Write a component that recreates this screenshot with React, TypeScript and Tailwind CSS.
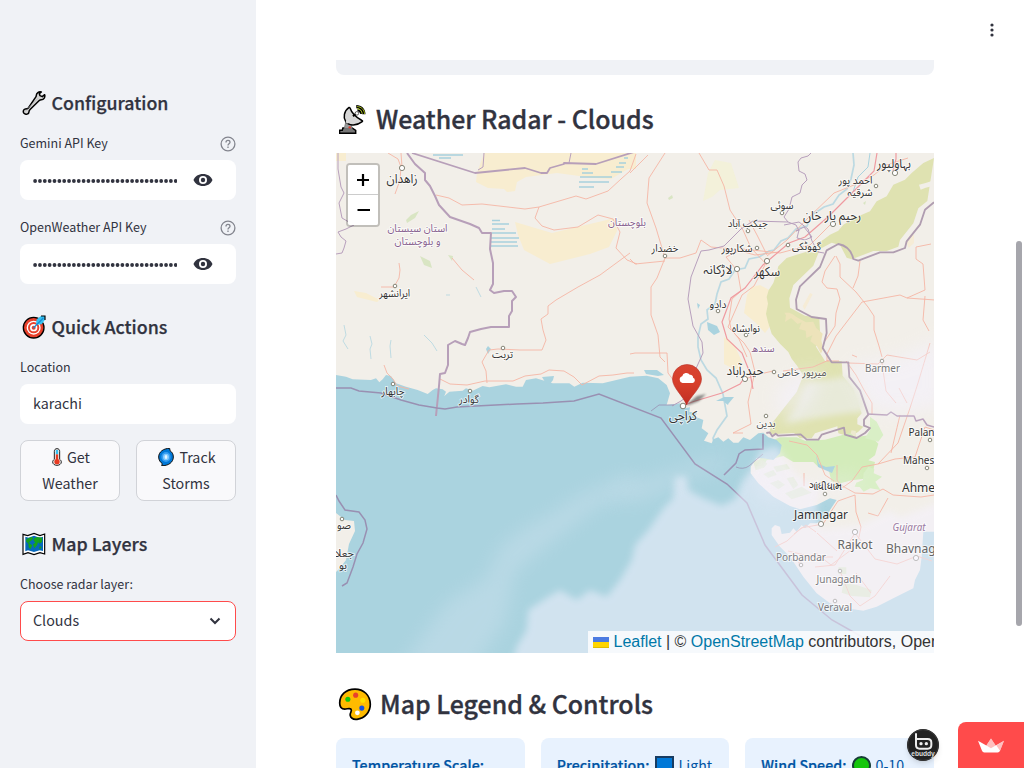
import type { ReactNode } from 'react';

const INK = '#31333f';

function Wrench() {
  return (
    <svg viewBox="0 0 72 72" className="size-6">
      <path d="M9 52c-6 1-8 8-4 13 5 5 15 3 15-5 0-3 2-5 4-7l26-26c2-2 4-3 7-3 8 0 12-8 10-15l-7 6-7-3-2-6 6-5c-8-2-15 3-15 10 0 3-1 5-3 7L18 49c-2 2-5 3-9 3z" transform="translate(1 2)" fill="#d5d5d5" stroke="#000" strokeWidth="4.500" strokeLinejoin="round" />
      <path d="M8 61l6-3M18 52l30-30" stroke="#aaa" strokeWidth="2" />
    </svg>
  );
}

function Target() {
  return (
    <svg viewBox="0 0 72 72" className="size-6">
      <circle cx="35" cy="38" r="31" fill="#e8412c" stroke="#000" strokeWidth="4" />
      <circle cx="35" cy="38" r="21" fill="#fff" />
      <circle cx="35" cy="38" r="17" fill="#e8412c" />
      <circle cx="35" cy="38" r="11" fill="#fff" />
      <circle cx="35" cy="38" r="6" fill="#e8412c" />
      <path d="M42 29l2-16L57 3h12v11L59 28z" fill="#35c1f1" />
      <path d="M57 3h12v12" stroke="#000" strokeWidth="3.500" fill="none" />
      <path d="M34 39L64 9" stroke="#168bd5" strokeWidth="3.500" />
    </svg>
  );
}

function WorldMap() {
  return (
    <svg viewBox="0 0 72 72" className="size-6">
      <path d="M3 7l14 4 19-7 18 7 14-5v60l-14-4-18 6-18-6-15 5z" fill="#fff" stroke="#000" strokeWidth="3.500" />
      <path d="M10 14l9 3 17-6 17 6 10-3v43l-10-2-17 5-18-5-8 3z" fill="#0669bc" />
      <path d="M14 20l7-2 9-3 4 4-7 8-6 4 5 6 5 3-6 12-5-6-1-11-7-7zM36 19l10-4 15 2-1 13-7 5-5-4-3 9-8 9-4-12 7-5-5-6zM54 43l5 2-4 6-5-2z" fill="#16a51b" />
      <path d="M18 16v39M53 16v39" stroke="#0b508a" opacity=".5" />
    </svg>
  );
}

function Radar() {
  return (
    <svg viewBox="0 0 94 102" className="mr-px ml-[3px] h-[34px] w-7">
      <path d="M13 81h31l12 8v10H2V89h9z" fill="#777" stroke="#000" strokeWidth="5" />
      <path d="M23 60h16l5 23H18z" fill="#999" stroke="#777" strokeWidth="3" />
      <path d="M34 12C16 24 14 46 22 58c9 15 34 19 56 2 2-1 1-3-1-4C60 47 44 35 37 14c-1-2-2-2-3-2z" fill="#d7d7d7" stroke="#000" strokeWidth="5" />
      <path d="M47 42l13-11M62 22c7-1 13 5 12 12" stroke="#000" strokeWidth="7" />
      <circle cx="60" cy="32" r="6" fill="#fff" stroke="#000" strokeWidth="2" />
      <path d="M58 4c18 0 31 13 31 31H78C78 23 70 16 58 15z" fill="#000" />
      <path d="M61 9c14 1 24 11 25 25M61 16c9 1 16 8 17 17" stroke="#b9d516" strokeWidth="3" fill="none" />
      <circle cx="29" cy="60" r="6" fill="#ddd" /><circle cx="36" cy="79" r="4" fill="#e33b2d" />
    </svg>
  );
}

function Palette() {
  return (
    <svg viewBox="0 0 100 100" className="size-[34px]">
      <path d="M50 6C22 6 5 24 5 47c0 13 6 18 15 18 7 0 14-4 18 0 5 6-4 10-2 19 2 8 10 12 20 11 23-3 39-21 39-44C95 24 75 6 50 6z" fill="#fb0" stroke="#000" strokeWidth="5" />
      <circle cx="52" cy="24" r="7.500" fill="#e8412c" /><circle cx="29" cy="36" r="7.500" fill="#16c60c" />
      <circle cx="73" cy="39" r="7.500" fill="#ffe000" /><circle cx="70" cy="62" r="7.500" fill="#1550e0" />
      <circle cx="57" cy="76" r="7" fill="#fff" />
    </svg>
  );
}

function Thermometer() {
  return (
    <svg viewBox="0 0 30 54" className="h-[18px] w-[10px] shrink-0">
      <path d="M15 2c-5 0-8 3-8 8v24c-3 2-5 5-5 8 0 6 6 10 13 10s13-4 13-10c0-3-2-6-5-8V10c0-5-3-8-8-8z" fill="#eee" stroke="#222" strokeWidth="3" />
      <path d="M15 6v13" stroke="#35c1f1" strokeWidth="7" />
      <path d="M15 19v20" stroke="#e83b21" strokeWidth="7" /><circle cx="15" cy="41" r="8" fill="#e83b21" />
    </svg>
  );
}

function Cyclone() {
  return (
    <svg viewBox="0 0 48 54" className="h-[18px] w-4 shrink-0">
      <path d="M35 1C16 1 2 12 2 27c0 9 5 16 11 20l-2 6c20 1 35-10 35-26 0-9-4-15-10-19z" fill="#0078d7" stroke="#111" strokeWidth="3" />
      <ellipse cx="24" cy="27" rx="14" ry="15" fill="#369cf0" />
      <ellipse cx="24" cy="27" rx="9" ry="10" fill="#83cbff" /><ellipse cx="24" cy="27" rx="4" ry="6" fill="#e5f5ff" />
    </svg>
  );
}

function Help() {
  return (
    <svg viewBox="0 0 16 16" className="size-4" fill="none" stroke="#83858e" strokeWidth="1.300">
      <circle cx="8" cy="8" r="6.900" />
      <path d="M6 6.400c0-1.200.8-2 2-2s2 .7 2 1.800c0 1.500-2 1.600-2 3.200" /><path d="M8 10.600v1.400" />
    </svg>
  );
}

function Eye() {
  return (
    <svg viewBox="0 0 20 14" className="h-[14px] w-5">
      <path fillRule="evenodd" d="M10 1C5.500 1 2 3.300.5 7 2 10.700 5.500 13 10 13s8-2.300 9.500-6C18 3.300 14.500 1 10 1zm0 10a4 4 0 110-8 4 4 0 010 8z" fill={INK} />
      <circle cx="10" cy="7" r="2.200" fill={INK} />
    </svg>
  );
}

function SideHeading({ icon, children }: { icon: ReactNode; children: ReactNode }) {
  return (
    <h3 className="flex h-6 items-center gap-[5.5px] pl-[2px] text-[17.8px] leading-6 font-medium">
      {icon}
      <span className="pb-[2px] whitespace-nowrap [-webkit-text-stroke:0.25px_#31333f]">{children}</span>
    </h3>
  );
}

function KeyField({ label }: { label: string }) {
  return (
    <div>
      <div className="flex h-6 items-center justify-between text-[12.5px] leading-6">
        <span className="pb-[2px]">{label}</span>
        <Help />
      </div>
      <div className="mt-1 flex h-10 items-center rounded-lg bg-white pl-[13px]">
        <svg viewBox="0 0 144 10" className="mt-px h-[10px] w-36">
          <path d="M2.100 5h144" stroke={INK} strokeWidth="3.800" strokeLinecap="round" strokeDasharray="0 4.850" />
        </svg>
        <span className="ml-4"><Eye /></span>
      </div>
    </div>
  );
}

type Label = { t: string; x: number; y: number; w?: number; s?: number; c?: string; start?: boolean; i?: boolean };
const P = '#87608f';
const labels: Label[] = [
  { t: 'زاهدان', x: 66, y: 30, w: 31, s: 13 },
  { t: 'استان سیستان', x: 81.5, y: 79, w: 60, c: P },
  { t: 'و بلوچستان', x: 81.500, y: 91.500, w: 46, c: P },
  { t: 'ایرانشهر', x: 58.7, y: 144, w: 31 },
  { t: 'تربت', x: 166.5, y: 205, w: 21 },
  { t: 'چابهار', x: 57, y: 242, w: 23 },
  { t: 'گوادر', x: 133, y: 250, w: 20 },
  { t: 'صو', x: 8, y: 376, w: 14 },
  { t: 'جعلا', x: 8.500, y: 404, w: 19 },
  { t: 'بو', x: 7, y: 416, w: 8 },
  { t: 'بلوچستان', x: 291, y: 73, w: 38, c: P },
  { t: 'خضدار', x: 329, y: 99, w: 27 },
  { t: 'سوئی', x: 446, y: 56, w: 23 },
  { t: 'جیکب آباد', x: 411.7, y: 74, w: 40 },
  { t: 'شکارپور', x: 401, y: 99, w: 31 },
  { t: 'لاڑکانہ', x: 382, y: 121, w: 29, s: 13 },
  { t: 'سکھر', x: 431, y: 123, w: 26, s: 13 },
  { t: 'گھوٹکی', x: 470.5, y: 97, w: 29 },
  { t: 'رحیم یار خان', x: 496, y: 67, w: 58, s: 13 },
  { t: 'احمد پور', x: 519.5, y: 31, w: 34 },
  { t: 'شرقیہ', x: 524, y: 43, w: 25 },
  { t: 'بہاولپور', x: 558, y: 15, w: 34, s: 13 },
  { t: 'دادو', x: 382, y: 155, w: 17 },
  { t: 'نوابشاہ', x: 410, y: 179, w: 28 },
  { t: 'سندھ', x: 427, y: 199, w: 23, c: P },
  { t: 'حیدرآباد', x: 409, y: 222, w: 37, s: 13 },
  { t: 'میرپور خاص', x: 466, y: 223, w: 49, c: '#555' },
  { t: 'Barmer', x: 546.5, y: 219, w: 35, c: '#777' },
  { t: 'کراچی', x: 347, y: 267, w: 28, s: 13 },
  { t: 'بدین', x: 430, y: 274, w: 19, c: '#555' },
  { t: 'Palanpur', x: 572.5, y: 283, s: 10, start: true },
  { t: 'Mahesana', x: 567, y: 311, s: 10, start: true },
  { t: 'Ahmedabad', x: 566, y: 339, s: 12, start: true },
  { t: 'ગાંધીધામ', x: 489, y: 337, w: 33, s: 10 },
  { t: 'Jamnagar', x: 485, y: 365.5, w: 54, s: 12 },
  { t: 'Rajkot', x: 519, y: 395.5, w: 35, s: 12, c: '#666' },
  { t: 'Bhavnagar', x: 550, y: 400, s: 12, start: true, c: '#666' },
  { t: 'Porbandar', x: 465, y: 407.5, w: 50, c: '#7c7b80' },
  { t: 'Gujarat', x: 573, y: 377.5, w: 33, c: '#9b7ba3', i: true },
  { t: 'Junagadh', x: 503, y: 430, w: 45, c: '#7c7b80' },
  { t: 'Veraval', x: 499, y: 458, w: 34, c: '#7c7b80' },
];

const towns: [number, number, number][] = [
  [66, 15, 2.6], [59, 133, 1.8], [167, 195, 1.8], [57, 231, 1.8], [134, 238, 1.8], [6, 366, 1.8],
  [329, 103, 1.8], [446, 60, 1.8], [412, 78, 1.8], [421, 95, 1.8], [401, 116, 2.6], [431, 108, 2.6],
  [452, 92, 1.8], [497, 71, 2.6], [540, 33, 1.8], [559, 20, 2.6], [382, 158, 1.8], [410, 182, 1.8],
  [409, 226, 2.6], [438, 219, 1.8], [546, 208, 1.8], [347, 253, 2.8], [430, 263, 1.8], [594, 287, 1.8],
  [591, 315, 1.8], [489, 341, 1.8], [485, 371, 2.6], [519, 379, 2.6], [580, 405, 2.6], [465, 412, 1.8],
  [504, 418, 1.8], [499, 448, 1.8],
];

const wetlands = [
  [97, 2, 30], [103, 5, 12], [156, 67.5, 8], [156, 71, 17], [156, 76, 13], [156, 80, 24], [155, 85, 28],
  [154, 89, 27], [155, 93, 27], [246, 16, 6], [246, 20, 11], [244, 24, 32], [243, 29, 30], [243, 34, 15],
  [280, 14, 8], [275, 19, 11], [283, 10, 7], [288, 5, 4],
];

function RadarMap() {
  return (
    <svg viewBox="0 0 598 500" className="block h-[500px] w-[598px]">
      <defs>
        <filter id="soft" x="-20%" y="-20%" width="140%" height="140%"><feGaussianBlur stdDeviation="11" /></filter>
        <filter id="wide" x="-40%" y="-40%" width="180%" height="180%"><feGaussianBlur stdDeviation="9" /></filter>
        <filter id="shade" x="-30%" y="-30%" width="160%" height="160%"><feGaussianBlur stdDeviation="1" /></filter>
        <linearGradient id="pin" x1="0" x2="0" y1="0" y2="1">
          <stop stopColor="#d94431" /><stop offset=".5" stopColor="#d63e2a" /><stop offset="1" stopColor="#c02d24" />
        </linearGradient>
      </defs>
      <rect width="598" height="500" fill="#f2efe9" />
      <g fill="#f8edd0">
        <path d="M148 0l-7 20-1 9 12 6 16 1 3 3 8-1 2-9 9-5 31-4 37 5 17 1 17-10h8V0z" />
        <path d="M179 69l37 11 21-5 42-10 2 13-8 16-19 7-40 10-26-14-6-15zM0 0h10v8H0zM18 138l12 2 14 7-3 2-20-5z" />
        <path d="M424 132l11 6-2 19 2 15-6 8-9-10-12-10 3-18 5-8zM388 184l10 7 9 20-7 6-12-6z" />
      </g>
      <path d="M379 7l16 3 8 25-19 2-8 7-9 4 5-28z" fill="#f3f1da" />
      <g fill="#d9e5c3"><path d="M70 67l5-5 8-4-4 7-8 5zM84 103l10 5 2 7-8-3zM112 102l5 1-1 5zM332 45l4-3 1 3-4 2zM527 50l3-2-1 4z" /></g>
      {wetlands.map(([x, y, w], i) => <path key={i} d={`M${x} ${y}h${w}`} stroke="#a7d0dd" strokeWidth="1.500" />)}

      <g transform="translate(394 0) scale(.33333)">
        <path d="M612 15l-32 15-35 30-20 20-35 15-20 35-30 15-20 30-35 15-20 10-25 15-15 18-25 12-20 15-15 10 5 18-15 12-25-4-30 9-30 10-25 25-5 20-10 30-14 22-6 20 4 20-6 30 6 25 11 35 25 30 25 25 10 20 15 20 20 30-20 50-40 50-35 45-8 30 8 2 67-4 18 16 35 0 10-15 67-21 3 21 35 10 25-15 15-15-18-7 0-18 13-15-25-73-32-40-3-44-50 0-27-43 12-45-2-42-43-6-45-24-2-28 12-40 60-58 20-50 35-19 25 7 20 38 15 5 65-25 40 0 35-13 5-20 40-50 15-45 27-22z" fill="#dfe2b1" />
        <path d="M612 82l-25 8-20 5 5 15 15-6 25-6z" fill="#f2efe9" />
        <path d="M158 472l10 15-3 20 18-12 20 18 12-5-8 20 20 5 2 22 18-8-6 18 20 15 12 22 6-15-5-25 4-20-20-18-8-18-22 2-25-14-15-10-10-5-15 0z" fill="#ede3ba" />
        <path d="M540 245l12 0 0 25-16 15-6-15zM240 420l8 4-24 46-6-10z" fill="#f6ecd6" />
        <path d="M355 860l10-28 12 2 2 20z" fill="#ece9cf" />
        <path d="M230 690l120-20 45 55 10 50-85 10-60 10-95 15 35-50z" fill="#e8ead9" filter="url(#wide)" />
      </g>
      <g transform="translate(294 197) scale(.33333)">
        <path d="M430 270l20-8 50 0 25 10 60-3 75-20 15 12 45-5 25 25-10 35-20 15 20 5-5 25-20 5-5 20-40 5-40 10-20-5-10-40-30-5-15-15-60 0-30-18-20 5-30 8-10 18-25 0z" fill="#d3ecba" />
        <path d="M720 200l20 15 20 40-15 20-40-10 15-25zM715 350l18 8-2 12 25 10-20 15 15 25-30-5-20 10-12-14-15-1 5-12 20-8 2-20z" fill="#d9efc6" />
        <g fill="#dde9c8">
          <path d="M370 335l22-8 20 14-10 12-25 8zM400 372l30-12 10 14-25 10zM430 350l40-8 10 14-40 10zM420 400l25-10 20 14-20 14zM470 385l20-5 15 25-15 12zM465 430l50-20 30 18-60 20z" opacity=".85" />
          <path d="M640 700l40 5 45 15-5 22-55-4-30-10zM625 652h24v20h-24z" />
        </g>
      </g>

      <path transform="translate(294 197) scale(.33333)" d="M-882 75L-852 80-832 88-777 90-762 85-752 97-742 88-732 75-717 78-702 100-672 110-637 120-607 132-592 120-582 115-562 118-552 125-557 138-542 125-502 122-492 115-472 122-442 108-422 112-372 103-342 110-322 110-312 90-282 85-232 100-182 100-167 110-142 98-82 100 0 80 50 77 85 85 110 105 120 130 110 165 150 160 160 175 180 172 178 185 200 190 196 200 220 210 215 235 235 250 222 272 245 280 250 268 265 262 280 275 295 265 310 278 325 278 340 262 360 270 385 250 400 248 415 262 440 270 455 285 450 310 430 330 400 325 380 325 362 350 362 370 385 400 430 440 480 468 510 478 560 465 600 445 620 450 600 480 590 500 560 520 540 520 525 535 515 525 500 545 490 535 480 548 455 552 450 530 435 525 425 535 425 555 450 590 480 620 520 680 560 730 600 760 650 775 700 782 740 770 790 745 850 715 855 690 870 660 875 620 880 545 912 545 912 909-882 909z" fill="#aad3df" />
      <g fill="#aad3df">
        <path d="M206 224l12-1-1 4-3 4-5-2zM152 193l3 3-3 5-2-5zM371 169l10 4 3 6-6 3-6-5zM308 217l13 0 7 5-6 1-12-2zM380 248l8-4 10 0-5 6-6-2zM361 150l3 2-2 4zM388 249l6-2-2 5zM480 302l3 9 7 3 9-1-3 7-14-6zM598 200v8z" />
      </g>
      <path d="M0 360l9 7 9 1 1 10-6 13-3 16-6 8-4 4z" fill="#f2efe9" />
      <g fill="none" stroke="#a9d2df" strokeWidth="1.700">
        <path d="M517 0l1 12-3 14-4 10-8 6-6 9-9 3-6 4-6 4-5 11-11 3-8 9-7 3-7 9-5 1-10 6-10 2-4 9-10 2-6 9-8 3-4 12-2 10-8 6 1 9-7 5-3 13 0 10 3 13 6 10 9 8 7 16 4 22-10 14-4 8 5 20-7 12" opacity=".75" />
        <path d="M534 0l-2 14-10 10-5 15" strokeWidth="1" />
        <path d="M34 183l2 8-2 5 1 10M55 187l-1 6 1 12M8 172l2 10-3 6 5 8M88 182l8 8 5 8M140 134l5 10M110 142h4" strokeWidth=".7" />
      </g>

      <g fill="none" stroke="#f5b5a5" strokeWidth=".9">
        <path d="M52 0l10 6 3 8-1 13-5 14M65 0l1 14M100 42l13 3 13 7 20-1 43 5 14-2 37-11 10 3 22-8 13-12 9-8 6-17" />
        <path d="M203 54l-4 11 7 8 12 4 24-3 20-12 15 4 7 13-4 16 11 12 10 4M294 100l-30 22-22 12-22 13-8 6 0 8-7 5 2 11 3 10-4 10-22 0-22-1-9 1-7 12 4 9 1 12" />
        <path d="M45 134h13l5-9 1-8-1-7M116 105l10 12 12 10M48 212l3 8 6 6 4 7 12 3M104 226l10 5 17 1 18-4 28 0 12-5 16-2 8-4 15 1 10 6 8 8 17-9 14-1 14-2 7 0" />
        <path d="M363 0l10 17 8 0 7 16 6 24 13 20 8 18 16 17M329 0l-16 25-2 25 9 25 9 30 15 0 16-5 5-13 10 7 22 2 22 6 24-3M294 20l8-8 10-10M294 106l5 5 30-3M329 105l-8 20-6 9 0 28 7 20 2 22 5 5" />
        <path d="M401 115l4 23-9 8-3 20 2 10 8 10 8 18M431 108l-13 25-12 9-14 32 16 16 6 9 5 20-7 30 3 22-18 9 10 0" />
        <path d="M409 226l15-5 13-3M447 218l30-4 16-7M431 102l-10-20-8-15M431 103l20-16 20-21 27-26 20-8 20-10 12-10 22-7M499 67l-25 25-30 8-37-4-17 8 10 12" />
        <path d="M499 103l-10 15-3 11 5 6 10 1 3 10-4 14-1 13-10 15M500 103l4 8 0 13 16 15 12 15 6 9 0 14 5 16 3 11M526 149l-26 34-9 18 0 7 12 0M526 149l38-7 7 3 28 2M524 108l-2 15-5 12M571 145l18-8-2-26-7-5 0-12 15-3M589 143l-2 24 6 11" />
        <path d="M512 210l30 1 9-9 30 5 13-8M510 208l10 14 8 15 8 13 0 12M546 210l4 28 10 12M516 202l5 2M594 190l-12 40-8 25-12 35-20 21-16 3-10 14-10 7-5-8 0-15M542 311l17-5 20-2 10-30 9 3M564 262l-9 38M571 250l-8-15" />
        <path d="M347 240l-15-20-1-20-32 0-5 1M519 340l18 1 10-5 10 6 28 2 13-2M519 340l-18-10-12-8-8-20-10-10-18-4M519 342l-17 6-15 23-22 4-14 13-12 6M519 342l1 17 5 15-2 10-8 13-20 15-15-12-18 10M519 380l-20 32-20 2M519 380l20 26 22 5 20-8 15 5M504 418l10 25 10 10 15-10 15-20M481 380l20 18M552 345l-10 18-10-3M480 379l-10-7-12 9M468 320v13M452 398l25 6 20 0M520 420l15 20" />
      </g>
      <path d="M541 0l-3 18-20 20-25 25-24 21-16 6-26 22-18 23-14 10-9 24 5 17 15 14 8 20 3 16M347 253l9-4 30-9 18-9 5-7M560 0l0 6-3 12" fill="none" stroke="#ef9aa0" strokeWidth="1.200" />

      <g fill="none" stroke="#b8a0bd" strokeWidth="1">
        <path d="M2 0l0 16 3 18 3 6-5 10 3 15 12 7-8 4-8 3 3 5 5 4-2 7-2 5-6 1M148 0l-1 14-5 3M235 0l-2 10M475 0l-3 3-7 2-3 4 1 9 6 3 2 6-5 5-2 8-8 4-3 12-5 8 4 5 8 3 3 6M452 69l-35-1-12 8-17 17-15 4-8 1-10 26-3 22 5 27 9 16 1 11-9 20 0 18-13 10-9 5M448 72l15-3 9 7 4 12 6 11 6 1" />
        <path d="M460 78l8-4 8 10-7 3-8-2 2-8z" />
      </g>
      <g fill="none" stroke="#b79fb9" strokeWidth="2" strokeLinejoin="round">
        <path d="M71 0l8 11 10 9 0 7 5 6 5 10 4 9 11 12 20 7 9 4 3 5 9 0-1 16 3 14 0 21-3 6 4 3 10-2 8 0 4 6-4 4 0 10-3 5 0 11-18 0-10 2-11 3-2 6-3 7-3-1-7-3-7 4 0 20-3 8-5 1-1 12-3 30" />
        <path d="M76 0l63 20 50-5 16 5 6 0 3-5 14-4 0-1 32 1 38-12" strokeWidth="1.800" />
        <path transform="translate(394 0) scale(.33333)" strokeWidth="5.500" stroke="#b09db0" d="M612 148l-27 22-15 45-40 50-5 20-35 13-40 0-65 25-15-5q-8-38-45-45l-35 19-20 50-60 58-12 40 2 28 45 24 43 6 2 42-12 45 27 43 50 0 3 44 32 40 25 73-13 15 0 18 18 7-15 15-25 15-35-10-3-21-67 21-10 15-35 0-18-16-67 4-8-6-10 8-8-12-10 2" />
        <path d="M531 261l20 1 4-3 6 4 17 0 2 5 7-2 4 6 7 2" strokeWidth="1.500" />
      </g>
      <g fill="none" stroke="#9990b2" strokeWidth="1.500">
        <path d="M0 235l15 0 8 3 22 2 20 7 18 5 18 3 8 1 12-2 60-3 26-1 31-2 25-7 62 24 34 46 32 20 20 19 18 42 37 50 30 25 32 18M388 322l12-12 3-9 6-4 18-1 0-15M0 342l3 6 6 9 14 2 6 8 2 9-4 14-6 11-4 13-6 16-5 3" />
        <path d="M427 301l-14 12q-6 4-13 1M315 258l8-6 15 0" strokeWidth=".8" />
      </g>
      {towns.map(([x, y, r], i) => <circle key={i} cx={x} cy={y} r={r} fill="#fff" stroke="#777768" strokeWidth=".9" />)}

      <g fill="#f5f2ff">
        <path transform="translate(124 277) scale(.33333)" filter="url(#soft)" opacity=".52" d="M150 720l20-70 30-50 5-60 60-40 35-20 50 30 40-30 50 20 40-50 35-60 10-45 40-45 45-65 30-30 5-65 35 0 5 40 45 25 55 22 40-20 20-50 35-45 20-50 50-15 60 90 70 40-10 60 10 60 120-10 90-45 30 20 130-50 170 50v500z" />
        <path filter="url(#wide)" opacity=".2" d="M60 520l50-70 40-25 15-32 27-20 20-10 30-20 50-22 12 8-50 30-45 35-30 25-10 50-40 60z" />
        <path filter="url(#wide)" opacity=".18" d="M270 350l28-22 50-15 30-10 20 10-40 10-50 25z" />
        <path filter="url(#wide)" opacity=".55" d="M513 213l50-8 45-20v70l-50 5-26-6zM440 237l30-18 15 2-12 30-26 18z" />
        <path filter="url(#wide)" opacity=".25" d="M430 310l25 30 20-10 40-10 10 6-15 18-40-4-38 12-20-25z" />
      </g>

      <g fontFamily='"Noto Sans","Noto Sans Arabic","DejaVu Sans",sans-serif'>
        {labels.map((l) => (
          <text key={l.t} x={l.x} y={l.y} fontSize={l.s ?? 10.500} fill={l.c ?? '#333'} stroke="#fff" strokeOpacity=".65" strokeWidth="2" paintOrder="stroke"
            textAnchor={l.start ? 'start' : 'middle'} fontStyle={l.i ? 'italic' : 'normal'} textLength={l.w} lengthAdjust="spacingAndGlyphs">{l.t}</text>
        ))}
      </g>

      <path d="M350 252l11-9 9-2-7 7-10 4z" fill="#333" opacity=".55" filter="url(#shade)" />
      <path d="M350.500 252c-3-9-14-17-14-26a14.500 14.500 0 0129 0c0 9-11 17-15 26z" fill="url(#pin)" stroke="#b8332a" strokeWidth=".6" />
      <path d="M346.500 230a3.500 3.500 0 01-.3-6.800 4.200 4.200 0 017.600-1.400 2.800 2.800 0 013.300 3 2.700 2.700 0 01-.5 5.200z" fill="#fff" />
    </svg>
  );
}

function LegendCard({ children }: { children: ReactNode }) {
  return (
    <div className="h-24 min-w-0 flex-1 overflow-hidden rounded-lg bg-[#e8f2fe] px-4 pt-[14px] text-[14.2px] leading-[26px] whitespace-nowrap text-[#0054a3]">
      <div className="flex items-center">{children}</div>
    </div>
  );
}

export default function App() {
  return (
    <div className="relative flex h-screen w-full overflow-hidden bg-white font-['Noto_Sans_CJK_SC','Source_Sans_Pro',sans-serif] text-[#31333f]">
      <aside className="flex w-64 shrink-0 flex-col bg-[#f0f2f6] px-5 pt-[91px]">
        <SideHeading icon={<Wrench />}>Configuration</SideHeading>
        <div className="mt-[17px]"><KeyField label="Gemini API Key" /></div>
        <div className="mt-4"><KeyField label="OpenWeather API Key" /></div>
        <div className="mt-[31px]"><SideHeading icon={<Target />}>Quick Actions</SideHeading></div>
        <div className="mt-4 text-[12.5px] leading-6">Location</div>
        <div className="mt-[5px] h-10 rounded-lg bg-white px-[13px] text-[14.3px] leading-[38px]">karachi</div>
        <div className="mt-4 flex gap-4">
          <button className="flex h-[61px] flex-1 flex-col items-center justify-center rounded-lg border border-[#d1d3d8] bg-[#f9f9fb] pb-[2px] text-[14.3px] leading-[26px]">
            <span className="flex items-center gap-[5px] pl-[2px]"><Thermometer />Get</span><span>Weather</span>
          </button>
          <button className="flex h-[61px] flex-1 flex-col items-center justify-center rounded-lg border border-[#d1d3d8] bg-[#f9f9fb] pb-[2px] text-[14.3px] leading-[26px]">
            <span className="flex items-center gap-[5px] pl-[2px]"><Cyclone />Track</span><span>Storms</span>
          </button>
        </div>
        <div className="mt-[31px]"><SideHeading icon={<WorldMap />}>Map Layers</SideHeading></div>
        <div className="mt-4 text-[12.5px] leading-6">Choose radar layer:</div>
        <div className="mt-[5px] flex h-10 shrink-0 items-center justify-between rounded-lg border border-[#ff4b4b] bg-white pr-[14px] pl-3 text-[14.3px]">
          <span className="pb-[2px]">Clouds</span>
          <svg viewBox="0 0 12 8" className="h-2 w-3"><path d="M1.500 1.500L6 6l4.500-4.500" fill="none" stroke={INK} strokeWidth="2" /></svg>
        </div>
      </aside>

      <main className="flex min-w-0 flex-1 flex-col">
        <header className="flex h-[60px] shrink-0 items-center justify-end pr-[30px]">
          <svg viewBox="0 0 4 14" className="h-[14px] w-1" fill={INK}><circle cx="2" cy="2" r="1.600" /><circle cx="2" cy="7" r="1.600" /><circle cx="2" cy="12" r="1.600" /></svg>
        </header>
        <div className="ml-20 w-[598px]">
          <div className="h-[15px] rounded-b-lg bg-[#f0f2f6]" />
          <h2 className="mt-[27px] flex h-[34px] items-center gap-2 text-[24.9px] leading-[34px] font-medium whitespace-nowrap"><Radar /><span className="pb-[2px] [-webkit-text-stroke:0.35px_#31333f]">Weather Radar - Clouds</span></h2>
          <div className="relative mt-[17px] h-[500px] overflow-hidden">
            <RadarMap />
            <div className="absolute top-[10px] left-[10px] flex w-[34px] flex-col rounded border-2 border-black/20 bg-clip-padding font-['Liberation_Sans',sans-serif]">
              <button className="flex h-[30px] items-center justify-center rounded-t-xs border-b border-[#ccc] bg-white"><svg viewBox="0 0 14 14" className="mt-px size-[14px]"><path d="M1 7h12M7 1v12" stroke="#000" strokeWidth="2.200" /></svg></button>
              <button className="flex h-[30px] items-center justify-center rounded-b-xs bg-white"><svg viewBox="0 0 14 14" className="size-[14px]"><path d="M1.500 7h12.500" stroke="#000" strokeWidth="2" /></svg></button>
            </div>
            <div className="absolute bottom-0 left-[252px] flex h-[22px] w-[346px] items-center overflow-hidden bg-white/80 pl-[5px] font-['Liberation_Sans',sans-serif] text-[16px] leading-[22px] whitespace-pre text-[#333]">
              <svg viewBox="0 0 16 11" className="mr-[4.5px] h-[11px] w-4 shrink-0"><path fill="#4c7be1" d="M0 0h16v5.500H0z" /><path fill="#ffd500" d="M0 5h16v5H0z" /><path fill="#e0bc00" d="M0 10h16v1H0z" /></svg>
              <span className="text-[#0078a8]">Leaflet</span><span> | © </span><span className="text-[#0078a8]">OpenStreetMap</span><span> contributors, OpenWeatherMap</span>
            </div>
          </div>
          <h2 className="mt-[34px] flex h-[34px] items-center gap-2 pl-[2px] text-[24.9px] leading-[34px] font-medium whitespace-nowrap"><Palette /><span className="pb-[2px] [-webkit-text-stroke:0.35px_#31333f]">Map Legend &amp; Controls</span></h2>
          <div className="mt-[17px] flex gap-4">
            <LegendCard><b className="font-medium tracking-[0.06px] [-webkit-text-stroke:0.25px_#0054a3]">Temperature Scale:</b></LegendCard>
            <LegendCard><b className="font-medium tracking-[0.06px] [-webkit-text-stroke:0.25px_#0054a3]">Precipitation:</b><span className="mr-[5px] ml-[5px] size-[19px] shrink-0 border-2 border-[#173c62] bg-[#0078d7]" />Light</LegendCard>
            <LegendCard><b className="font-medium tracking-[0.06px] [-webkit-text-stroke:0.25px_#0054a3]">Wind Speed:</b><span className="mr-[5px] ml-[5px] size-[19px] shrink-0 rounded-full border-2 border-[#173c37] bg-[#16c60c]" />0-10</LegendCard>
          </div>
        </div>
      </main>

      <div className="absolute top-[241px] right-[2px] h-[385px] w-[6px] rounded-full bg-[#a6a6ac]" />
      <div className="absolute top-[729px] left-[907px] size-8 rounded-full bg-[#222] shadow-md">
        <svg viewBox="0 0 96 96" className="size-8">
          <circle cx="48" cy="48" r="46" fill="#222" stroke="#444" strokeWidth="2" />
          <path d="M27 13v35q0 11 11 11h24q11 0 11-11V41q0-11-11-11H29" fill="none" stroke="#eee" strokeWidth="6" />
          <circle cx="42" cy="44" r="5" fill="#eee" /><circle cx="58" cy="44" r="5" fill="#eee" />
          <text x="48" y="82" fontSize="20" fontFamily="Liberation Sans, sans-serif" fontWeight="bold" fill="#ddd" textAnchor="middle" textLength="70">ebuddy</text>
        </svg>
      </div>
      <div className="absolute right-0 bottom-0 flex h-[46px] w-[66px] items-center justify-center rounded-tl-lg bg-[#ff4b4b]">
        <svg viewBox="0 0 78 44" className="h-[15px] w-[26px]">
          <path d="M0 8l25 14L39 1l14 21L78 8 66 38q-2 5-7 5H19q-5 0-7-5z" fill="#fff" />
          <path d="M39 1l14 21-14 8-14-8zM55 22L78 8 66 38z" fill="#ff9d9d" opacity=".65" />
        </svg>
      </div>
    </div>
  );
}
